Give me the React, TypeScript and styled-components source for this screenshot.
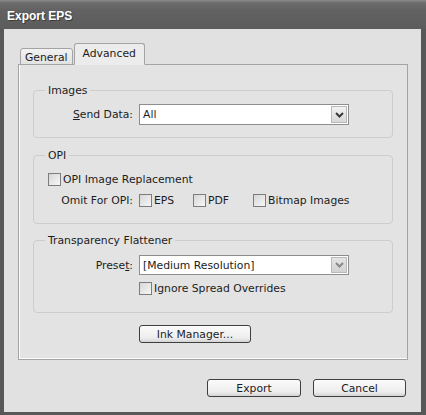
import React from "react";
import styled, { createGlobalStyle } from "styled-components";

const GlobalStyle = createGlobalStyle`
  html, body {
    margin: 0;
    padding: 0;
    background: #5a5a5a;
  }
  body {
    font-family: "DejaVu Sans", "Liberation Sans", sans-serif;
    font-size: 10.8px;
    line-height: 13px;
    color: #1c1c1c;
  }
`;

const Window = styled.div`
  width: 426px;
  height: 415px;
  box-sizing: border-box;
  background: #585858;
  padding: 0 5px 3px 4px;
  display: flex;
  flex-direction: column;
`;

const TitleBar = styled.div`
  height: 29px;
  flex: none;
  box-sizing: border-box;
  margin: 0 -5px 0 -4px;
  padding: 3px 0 0 7px;
  display: flex;
  align-items: center;
  background: linear-gradient(#8a8a8a 0, #6c6c6c 3px, #626262 10px, #5c5c5c 100%);
  color: #fff;
  font-family: "Liberation Sans", Arial, sans-serif;
  font-weight: bold;
  font-size: 12px;
  text-shadow: 1px 1px 0 #3c3c3c;
`;

const Body = styled.div`
  flex: 1;
  background: #e1e1e1;
  padding: 15px 13px 0 14px;
  display: flex;
  flex-direction: column;
`;

const TabRow = styled.div`
  display: flex;
  align-items: flex-end;
  height: 21px;
  padding-left: 2px;
  gap: 1px;
  margin-bottom: -1px;
  position: relative;
  z-index: 1;
`;

const Tab = styled.div<{ $active?: boolean }>`
  box-sizing: border-box;
  height: ${(p) => (p.$active ? 22 : 17)}px;
  padding: ${(p) => (p.$active ? "3px 8px 0" : "2px 4px 0")};
  border: 1px solid #a4a4a4;
  border-bottom-color: ${(p) => (p.$active ? "#ececec" : "#a4a4a4")};
  border-radius: 3px 3px 0 0;
  background: ${(p) =>
    p.$active ? "#ececec" : "linear-gradient(#f2f2f2, #e2e2e2)"};
`;

const Panel = styled.div`
  height: 296px;
  box-sizing: border-box;
  border: 1px solid #a4a4a4;
  background: #e3e3e3;
  box-shadow: inset 1px 0 0 #fbfbfb, inset 0 -1px 0 #fbfbfb;
  padding: 19px 14px 12px 14px;
  display: flex;
  flex-direction: column;
`;

const Group = styled.fieldset<{ $top?: number }>`
  margin: ${(p) => p.$top ?? 0}px 0 0 0;
  border: 1px solid #cdcdcd;
  border-radius: 4px;
  padding: 0 14px;
  min-width: 0;
  display: flex;
  flex-direction: column;
`;

const Legend = styled.legend`
  padding: 0 3px;
  margin-left: -3px;
  line-height: 13px;
`;

const Rows = styled.div<{ $pt: number; $pb: number; $gap: number }>`
  display: flex;
  flex-direction: column;
  gap: ${(p) => p.$gap}px;
  padding: ${(p) => p.$pt}px 0 ${(p) => p.$pb}px;
`;

const Row = styled.div`
  display: grid;
  grid-template-columns: 85px auto;
  column-gap: 6px;
  align-items: center;
`;

const Label = styled.span`
  text-align: right;
  white-space: nowrap;
`;

const Key = styled.span`
  text-decoration: underline;
`;

const Select = styled.div<{ $h: number }>`
  width: 210px;
  height: ${(p) => p.$h}px;
  box-sizing: border-box;
  border: 1px solid #8e8e8e;
  background: #fff;
  display: flex;
  align-items: center;
  justify-content: space-between;
  padding-left: 3px;
`;

const DropButton = styled.div<{ $dim?: boolean }>`
  width: 16px;
  align-self: stretch;
  margin: 1px;
  box-sizing: border-box;
  border: 1px solid #b9b9b9;
  background: ${(p) =>
    p.$dim ? "linear-gradient(#e4e4e4, #d2d2d2)" : "linear-gradient(#f2f2f2, #d8d8d8)"};
  display: flex;
  align-items: center;
  justify-content: center;
  color: ${(p) => (p.$dim ? "#8a8a8a" : "#3a3a3a")};
`;

const Checks = styled.div`
  display: flex;
  align-items: center;
`;

const CheckItem = styled.label<{ $w?: number }>`
  display: flex;
  align-items: center;
  gap: 2px;
  width: ${(p) => (p.$w ? `${p.$w}px` : "auto")};
  white-space: nowrap;
`;

const Box = styled.span`
  width: 13px;
  height: 13px;
  box-sizing: border-box;
  border: 1px solid #7c7c7c;
  background: linear-gradient(135deg, #d6d6d6, #f7f7f7);
  flex: none;
`;

const Button = styled.div<{ $w: number; $left?: number; $top?: number }>`
  width: ${(p) => p.$w}px;
  height: 18px;
  box-sizing: border-box;
  margin: ${(p) => p.$top ?? 0}px 0 0 ${(p) => p.$left ?? 0}px;
  border: 1px solid #3f3f3f;
  border-radius: 3px;
  background: linear-gradient(#fbfbfb, #ededed 75%, #d4d4d4);
  display: flex;
  align-items: center;
  justify-content: center;
`;

const Footer = styled.div`
  display: flex;
  justify-content: flex-end;
  gap: 12px;
  padding: 19px 2px 0 0;
`;

const Chevron = () => (
  <svg width="9" height="6" viewBox="0 0 9 6">
    <path d="M1 1 L4.5 4.5 L8 1" fill="none" stroke="currentColor" strokeWidth="2" />
  </svg>
);

const Check = ({ text, w }: { text: string; w?: number }) => (
  <CheckItem $w={w}>
    <Box />
    <span>{text}</span>
  </CheckItem>
);

export default function App() {
  return (
    <>
      <GlobalStyle />
      <Window>
        <TitleBar>Export EPS</TitleBar>
        <Body>
          <TabRow>
            <Tab>General</Tab>
            <Tab $active>Advanced</Tab>
          </TabRow>
          <Panel>
            <Group>
              <Legend>Images</Legend>
              <Rows $pt={7} $pb={12} $gap={0}>
                <Row>
                  <Label>
                    <Key>S</Key>end Data:
                  </Label>
                  <Select $h={21}>
                    <span>All</span>
                    <DropButton>
                      <Chevron />
                    </DropButton>
                  </Select>
                </Row>
              </Rows>
            </Group>
            <Group $top={11}>
              <Legend>OPI</Legend>
              <Rows $pt={11} $pb={16} $gap={8}>
                <Check text="OPI Image Replacement" />
                <Row>
                  <Label>Omit For OPI:</Label>
                  <Checks>
                    <Check text="EPS" w={54} />
                    <Check text="PDF" w={60} />
                    <Check text="Bitmap Images" />
                  </Checks>
                </Row>
              </Rows>
            </Group>
            <Group $top={10}>
              <Legend>Transparency Flattener</Legend>
              <Rows $pt={8} $pb={17} $gap={7}>
                <Row>
                  <Label>
                    Prese<Key>t</Key>:
                  </Label>
                  <Select $h={20}>
                    <span>[Medium Resolution]</span>
                    <DropButton $dim>
                      <Chevron />
                    </DropButton>
                  </Select>
                </Row>
                <Row>
                  <span />
                  <Check text="Ignore Spread Overrides" />
                </Row>
              </Rows>
            </Group>
            <Button $w={112} $left={106} $top={12}>
              Ink Manager...
            </Button>
          </Panel>
          <Footer>
            <Button $w={94}>Export</Button>
            <Button $w={93}>Cancel</Button>
          </Footer>
        </Body>
      </Window>
    </>
  );
}
